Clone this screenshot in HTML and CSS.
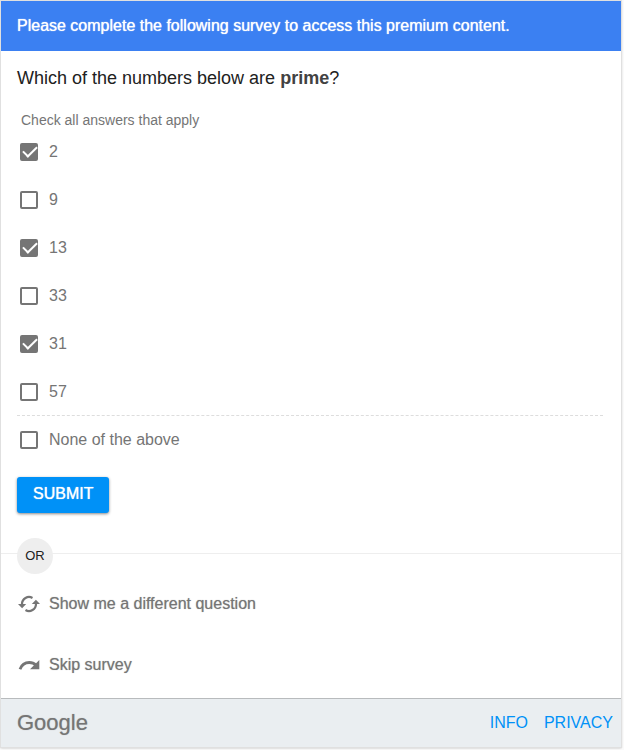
FILE: index.html
```html
<!DOCTYPE html>
<html lang="en">
<head>
<meta charset="utf-8">
<meta name="viewport" content="width=device-width, initial-scale=1">
<title>Survey</title>
<link rel="stylesheet" href="styles.css">
</head>
<body>
<main class="card">
  <header class="banner">Please complete the following survey to access this premium content.</header>
  <form class="survey">
    <h1 class="question">Which of the numbers below are <strong>prime</strong>?</h1>
    <fieldset class="answers">
      <legend class="hint">Check all answers that apply</legend>
      <label class="option"><input type="checkbox" checked>2</label>
      <label class="option"><input type="checkbox">9</label>
      <label class="option"><input type="checkbox" checked>13</label>
      <label class="option"><input type="checkbox">33</label>
      <label class="option"><input type="checkbox" checked>31</label>
      <label class="option"><input type="checkbox">57</label>
      <label class="option option-none"><input type="checkbox">None of the above</label>
    </fieldset>
    <button class="submit" type="button">SUBMIT</button>
  </form>
  <div class="divider"><span class="or">OR</span></div>
  <nav class="alternatives">
    <button class="action" type="button">
      <svg class="icon" viewBox="0 0 24 24" aria-hidden="true">
        <path d="M5 13v-1a7 7 0 0 1 10.500-6.060M19 11v1a7 7 0 0 1-10.500 6.060" fill="none" stroke="currentColor" stroke-width="2.200"/>
        <path d="M1 12h8.200l-4.100 4.200zM14.800 12h8.200l-4.100-4.200z" fill="currentColor"/>
      </svg>
      Show me a different question
    </button>
    <button class="action" type="button">
      <svg class="icon" viewBox="0 0 24 24" aria-hidden="true">
        <path d="M3 16.200c1.500-4 5.200-6.700 9.300-6.700 2.800 0 5 1 6.700 2.700" fill="none" stroke="currentColor" stroke-width="2.800"/>
        <path d="M22.300 7v9.300H13z" fill="currentColor"/>
      </svg>
      Skip survey
    </button>
  </nav>
  <footer class="footer">
    <span class="logo">Google</span>
    <a class="link" href="#info">INFO</a>
    <a class="link" href="#privacy">PRIVACY</a>
  </footer>
</main>
</body>
</html>
```
FILE: styles.css
```css
* {
  box-sizing: border-box;
}

body {
  margin: 0;
  padding: 1px 3px 3px 1px;
  background: #fafafa;
  color: #757575;
  font: 16px/24px "Liberation Sans", Arial, sans-serif;
}

.card {
  background: #fff;
  box-shadow: 0 0 1px 1px #e0e0e0, 0 1px 2px #bbb;
}

.banner {
  padding: 13px 16px;
  background: #3b80f2;
  color: #fff;
  text-shadow: 0 0 1px #fff;
}

.survey {
  padding: 14px 16px 25px;
}

.question {
  margin: 0;
  color: #212121;
  font-size: 18px;
  font-weight: 400;
  line-height: 26px;
}

.question strong {
  color: #424242;
}

.answers {
  margin: 0 2px 0 0;
  padding: 0;
  border: 0;
  min-width: 0;
}

.hint {
  padding: 21px 4px 0;
  font-size: 14px;
  line-height: 16px;
}

.option {
  display: flex;
  align-items: center;
  gap: 11px;
  height: 48px;
  padding-left: 3px;
  line-height: 26px;
}

.option-none {
  height: 49px;
  margin-top: -1px;
  border-top: 1px dashed #ddd;
}

.option input {
  flex: none;
  appearance: none;
  width: 18px;
  height: 18px;
  margin: 0;
  border: 2px solid #757575;
  border-radius: 2px;
}

.option input:checked {
  background: #757575;
}

.option input:checked::before {
  content: "";
  display: block;
  width: 6px;
  height: 12px;
  margin: -2px 0 0 4px;
  border: solid #fff;
  border-width: 0 2px 2px 0;
  transform: rotate(45deg);
}

.submit {
  display: block;
  height: 36px;
  margin-top: 13px;
  padding: 0 16px 2px;
  border: 0;
  border-radius: 3px;
  background: #0091f7;
  box-shadow: 0 1px 3px #888;
  color: #fff;
  font: inherit;
  text-shadow: 0 0 1px #fff;
}

.divider {
  display: flex;
  align-items: center;
  padding-left: 16px;
  background: linear-gradient(#eee, #eee) 0 15px / 100% 1px no-repeat;
}

.or {
  width: 36px;
  border-radius: 50%;
  background: #eee;
  color: #212121;
  font-size: 13px;
  line-height: 36px;
  text-align: center;
}

.alternatives {
  display: flex;
  flex-direction: column;
  align-items: flex-start;
  gap: 37px;
  padding: 18px 16px 21px;
}

.action {
  display: flex;
  align-items: center;
  gap: 8px;
  padding: 0;
  border: 0;
  background: none;
  color: #757575;
  font: inherit;
  text-shadow: 0 0 1px #aaa;
}

.icon {
  width: 24px;
  height: 24px;
}

.footer {
  display: flex;
  align-items: center;
  gap: 16px;
  height: 49px;
  padding: 0 8px 0 16px;
  border-top: 1px solid #b8bbbd;
  background: #eaeef1;
}

.logo {
  margin-right: auto;
  font-size: 22px;
  text-shadow: 0 0 1px #aaa;
}

.link {
  color: #0091f7;
  text-decoration: none;
}
```
